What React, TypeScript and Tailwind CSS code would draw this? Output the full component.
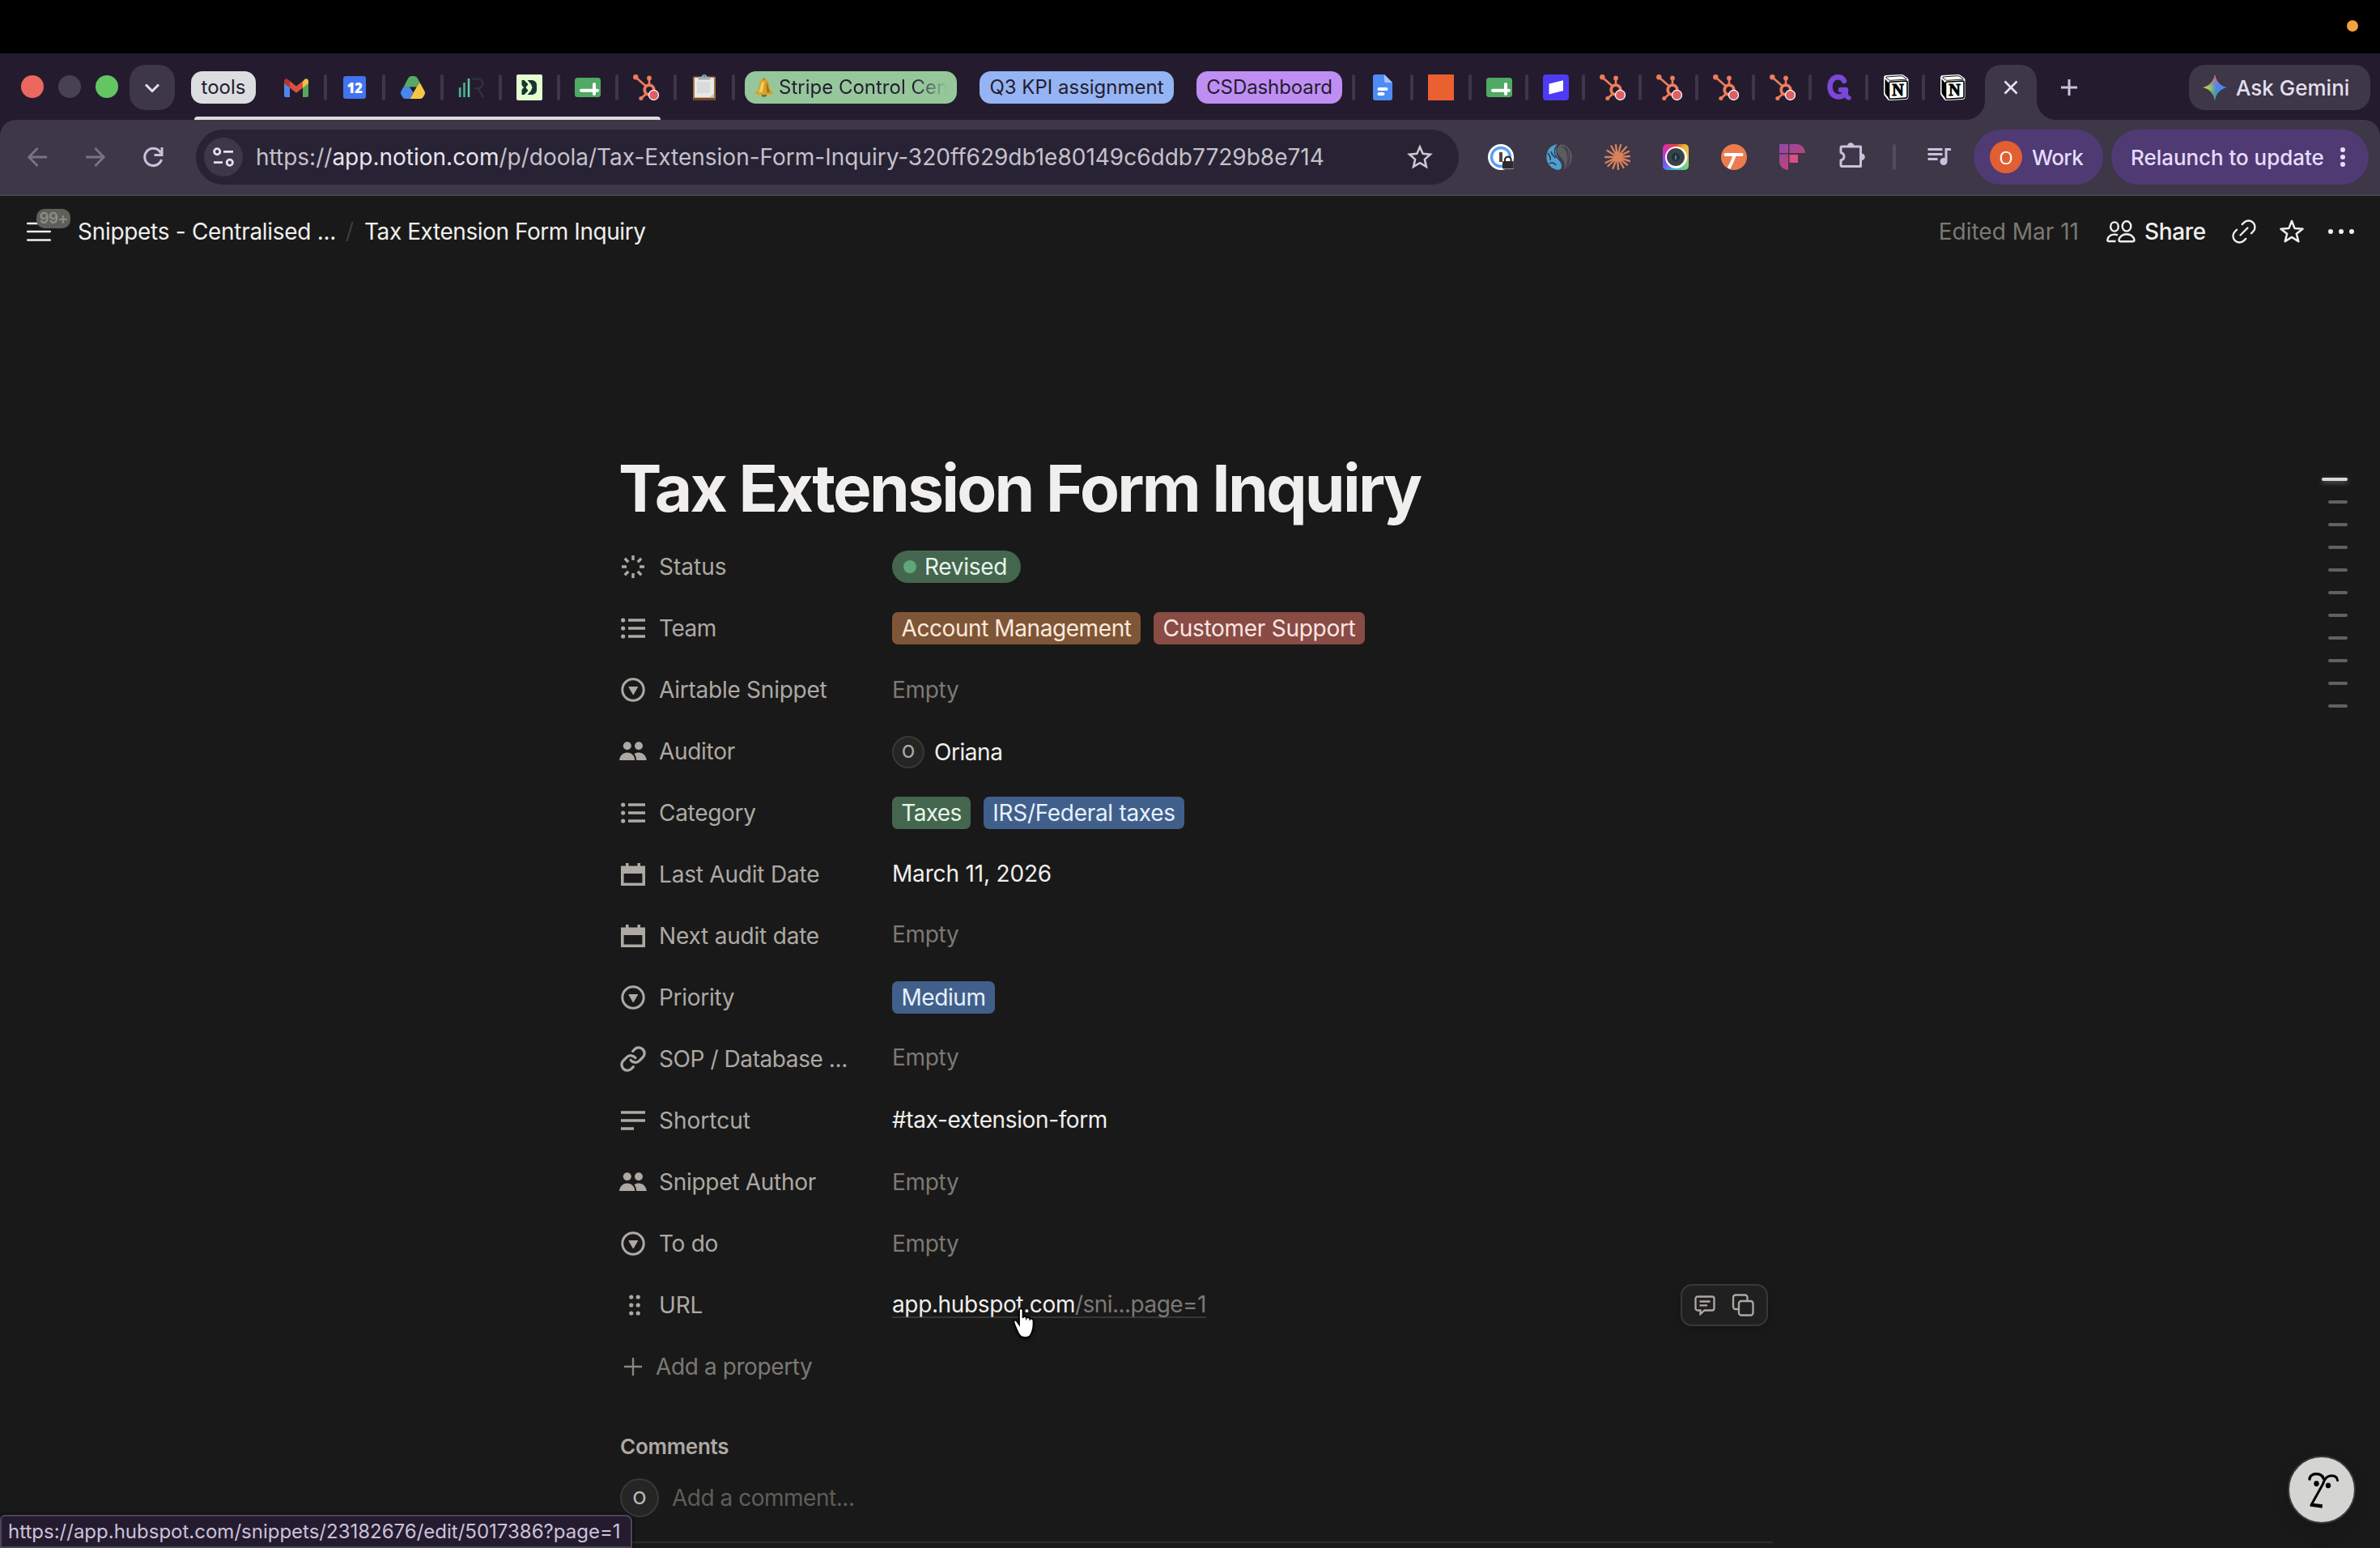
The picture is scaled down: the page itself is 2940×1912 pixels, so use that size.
import React from "react";
import { MdQueueMusic } from "react-icons/md";
import { Link, Link2 } from "lucide-react";

type TProps = { c?: string; children: React.ReactNode };
const T = ({ c = "", children }: TProps) => <span className={"whitespace-nowrap " + c}>{children}</span>;

/* ---------- tab strip icons ---------- */
const Gmail = () => (
  <svg width="30" height="23" viewBox="0 0 30 23">
    <path d="M0 4v17a2 2 0 0 0 2 2h5V10z" fill="#4f86ec" />
    <path d="M30 4v17a2 2 0 0 1-2 2h-5V10z" fill="#58a55c" />
    <path d="M23 3.500l2-2.200c2-2 5-.6 5 2V6l-7 5.500z" fill="#f1bf42" />
    <path d="M0 6V3.300C0 .7 3-.7 5 1.200l2 1.700v8.600z" fill="#b3362b" />
    <path d="M7 3l8 6.500L23 3v8.500l-8 6.300-8-6.300z" fill="#d95040" />
  </svg>
);
const Calendar12 = () => (
  <div className="flex h-7 w-7 items-center justify-center rounded-[3px] bg-[#4274ef] font-['Open_Sans'] text-[17px] leading-none font-extrabold tracking-[-0.5px] text-white">12</div>
);
const Drive = () => (
  <svg width="30" height="28" viewBox="0 0 30 28">
    <path d="M3.400 13.700L9 3C10 1 11.800 0 13.500 0h3c1.700 0 3.500 1 4.500 3l3 5.500-4.500 5.200z" fill="#58a961" />
    <path d="M3.400 13.500h7.800L15.500 20 11.500 28H6c-1.500 0-3-.8-3.800-2.200L.6 23c-.8-1.500-.8-3 0-4.500z" fill="#4b86f0" />
    <path d="M23.800 8.200l5.600 10.300c.8 1.500.8 3 0 4.500l-1.600 2.800C27 27.200 25.500 28 24 28H11.500l8-14.500z" fill="#f5c744" />
    <path d="M11 13.600h8.600l-4.200 6.200z" fill="#241c2e" />
  </svg>
);
const BarsR = () => (
  <svg width="32" height="26" viewBox="0 0 32 26">
    <path d="M2.200 13v12M7.500 7v18" stroke="#46b48c" strokeWidth="2.600" />
    <path d="M13 2v23" stroke="#5fc7a0" strokeWidth="2.600" />
    <path d="M17.500 2.500h7a5.800 5.800 0 0 1 0 11.600h-4.500M24.500 14L31 25.500" fill="none" stroke="#34323a" strokeWidth="2.200" />
  </svg>
);
const Doola = () => (
  <svg width="32" height="32" viewBox="0 0 32 32">
    <rect width="32" height="32" rx="2" fill="#e4fed0" />
    <path d="M6.500 7h3l5 5-3 4 3 4-5 5h-3v-6L9 16l-2.500-3z" fill="#16352f" />
    <path d="M13.500 7h5C22.500 7 25 9.500 25 13v6c0 3.500-2.500 6-6.500 6h-5l4.500-5 1.500-4L18 12z" fill="#16352f" />
  </svg>
);
const Sheet = () => (
  <svg width="32" height="24" viewBox="0 0 32 24">
    <rect width="32" height="24" rx="3.500" fill="#50a964" />
    <path d="M8 15.800h20M24 8v12" stroke="#fff" strokeWidth="4" strokeLinecap="round" />
  </svg>
);
const Hub = () => (
  <svg width="32" height="32" viewBox="0 0 32 32">
    <g stroke="#ee7d5c" fill="none">
      <path d="M4 4l12 10.500M20 4v9M16 24l-6 5.500" strokeWidth="2.600" />
      <circle cx="20" cy="19" r="5.800" strokeWidth="3.800" />
    </g>
    <g fill="#ee7d5c">
      <circle cx="3.300" cy="3.300" r="3.200" />
      <circle cx="20" cy="4.500" r="2.900" />
      <circle cx="9.800" cy="29.400" r="2.500" />
    </g>
    <circle cx="25.500" cy="25.400" r="6" fill="#dd5f63" stroke="#fff" strokeWidth="1.300" />
  </svg>
);
const Clipboard = () => (
  <svg width="30" height="32" viewBox="0 0 30 32">
    <rect x="1" y="2.500" width="28" height="29.500" rx="1.500" fill="#a0753c" />
    <rect x="1.500" y="29" width="27" height="3" rx="1" fill="#6f4a1e" />
    <rect x="3" y="4" width="24" height="24.500" fill="#e9e9ea" />
    <path d="M6 9h16v14H6z" fill="#dadadb" />
    <path d="M21 28.500l6-5v5z" fill="#c4c4c6" />
    <path d="M8 4.500V3h3.500c.5-2 1.800-3 3.500-3s3 1 3.500 3H22v1.500l1 2H7z" fill="#a5abb3" />
    <circle cx="15" cy="2.300" r="1.100" fill="#5c626b" />
  </svg>
);
const Bell = () => (
  <svg width="24" height="24" viewBox="0 0 24 24">
    <circle cx="12" cy="2.300" r="2" fill="#b98219" />
    <ellipse cx="12" cy="21.500" rx="3.200" ry="2.200" fill="#8d5f10" />
    <path d="M12 2.200c4.500 0 6 3.500 6.500 8 .4 4 1.200 5.800 5 8.300.9 1-1 2-4 2.300-4.500.5-10.500.5-15 0-3-.3-4.900-1.300-4-2.300 3.800-2.500 4.600-4.300 5-8.300.5-4.500 2-8 6.500-8z" fill="#d9a22b" />
    <path d="M9.500 5c-2 3-1.500 8-4.500 12.500l4.500.6C11.500 13 11 8 12 5z" fill="#f3cf66" />
    <path d="M15 5c2.300 3.500 1.700 8.500 5 13l-4.500.5C14.500 14 14.500 9 15 5z" fill="#a97414" />
  </svg>
);
const Doc = () => (
  <svg width="24" height="32" viewBox="0 0 24 32">
    <path d="M3 0h11l10 10v19a3 3 0 0 1-3 3H3a3 3 0 0 1-3-3V3a3 3 0 0 1 3-3z" fill="#4f8bf5" />
    <path d="M14 0l10 10H16a2 2 0 0 1-2-2z" fill="#a6c4f8" />
    <path d="M7.500 18h9M7.500 24h5" stroke="#fff" strokeWidth="4" strokeLinecap="round" />
  </svg>
);
const Orange = () => <div className="h-8 w-8 bg-[#ea6030]" />;
const Stripe = () => (
  <svg width="32" height="32" viewBox="0 0 32 32">
    <rect width="32" height="32" rx="4" fill="#4f3af4" />
    <path d="M7.500 11.500L25 7.200v12.900l-17.500 4.500z" fill="#fff" />
  </svg>
);
const GLogo = () => (
  <svg width="30" height="32" viewBox="0 0 30 32">
    <path d="M21 8C19.500 4.500 17 3.200 13.500 3.200 7 3.200 3.500 9 3.500 15.500S7.500 27.500 14 27.500c5.500 0 9-3.500 9-8.500h-6" fill="none" stroke="#7b47d8" strokeWidth="6.500" strokeLinecap="round" strokeLinejoin="round" />
    <path d="M23 19v4c0 3 1.500 5 4 6" fill="none" stroke="#7b47d8" strokeWidth="5.500" strokeLinecap="round" />
  </svg>
);
const Notion = () => (
  <svg width="32" height="32" viewBox="0 0 32 32">
    <path d="M1 4.500C1 2 2 1.300 4 1.100L22 0c2 0 3 .3 4.500 1.400l3.500 2.600c1 .9 1.500 1.500 1.500 3V27c0 2.500-1 3.800-3.500 4L9.500 32c-1.800.1-3-.3-4-1.600L2 26c-.8-1.200-1-2-1-3.500z" fill="#fff" />
    <path d="M2.500 5.500l4.500 5V29L3.300 24.500c-.6-.8-.8-1.400-.8-2.400z" fill="#000" />
    <path d="M4 3l18-1.300c1.200 0 2 .1 3 .8L29 5.300c.5.4.3.8-.3.800L9.500 7.300c-1 0-1.700-.2-2.300-.7L3.800 3.900c-.4-.4-.3-.8.2-.9z" fill="#fff" stroke="#000" strokeWidth=".9" />
    <path d="M8.500 9.200L28.800 8c.7 0 1.200.4 1.200 1.200V27c0 1.300-.6 2-1.900 2.100L9.500 30.200c-1.300.1-2-.4-2-1.700V10.400c0-.7.300-1.100 1-1.200z" fill="#fff" stroke="#000" strokeWidth="1.600" />
    <text x="11.300" y="25.800" fontFamily="Liberation Serif, serif" fontWeight="700" fontSize="20" fill="#000" stroke="#000" strokeWidth=".9">N</text>
  </svg>
);
const Divider = () => <div className="h-8 w-1 shrink-0 rounded-full bg-[#3d3748]" />;
const Cell = ({ children }: { children: React.ReactNode }) => (
  <>
    <div className="flex w-[68px] shrink-0 items-center justify-center">{children}</div>
    <Divider />
  </>
);
const TightCell = ({ children, last }: { children: React.ReactNode; last?: boolean }) => (
  <>
    <div className="flex w-[66px] shrink-0 items-center justify-center pl-px">{children}</div>
    {!last && <Divider />}
  </>
);

const TabStrip = () => (
  <div className="flex h-[82px] shrink-0 items-center bg-[#241c2e] pt-[2px] pl-[26px] font-[Inter]">
    <div className="mb-[2px] flex gap-[18px]">
      <div className="h-7 w-7 rounded-full bg-[#ed6761]" />
      <div className="h-7 w-7 rounded-full bg-[#484153]" />
      <div className="h-7 w-7 rounded-full bg-[#62c663]" />
    </div>
    <div className="ml-[14px] flex h-14 w-14 shrink-0 items-center justify-center rounded-[20px] bg-[#3d3748]">
      <svg width="20" height="13" viewBox="0 0 20 13"><path d="M2 2.500l8 8 8-8" fill="none" stroke="#e6dcf8" strokeWidth="3" /></svg>
    </div>
    <div className="relative ml-5 flex shrink-0 items-center">
      <div className="mr-4 flex h-10 w-20 items-center justify-center rounded-[14px] bg-[#dcdde1] text-[24px] text-[#241c2e]"><T>tools</T></div>
      <Cell><Gmail /></Cell>
      <Cell><Calendar12 /></Cell>
      <Cell><Drive /></Cell>
      <Cell><BarsR /></Cell>
      <Cell><Doola /></Cell>
      <Cell><Sheet /></Cell>
      <Cell><Hub /></Cell>
      <div className="absolute top-14 left-1 h-1 w-[576px] rounded-t-full bg-[#dcdde1]" />
    </div>
    <Cell><Clipboard /></Cell>
    <div className="ml-3 flex h-10 w-[262px] shrink-0 items-center gap-[6px] overflow-hidden rounded-[14px] bg-[#95c79b] pl-3 text-[24px] text-[#241c2e]">
      <div className="shrink-0"><Bell /></div>
      <div className="w-[208px] overflow-hidden bg-gradient-to-r from-[#241c2e] from-80% to-transparent bg-clip-text text-transparent"><T>Stripe Control Cen</T></div>
    </div>
    <div className="ml-7 flex h-10 w-60 shrink-0 items-center justify-center rounded-[14px] bg-[#95b4f3] text-[24px] text-[#241c2e]"><T>Q3 KPI assignment</T></div>
    <div className="mr-3 ml-7 flex h-10 w-[180px] shrink-0 items-center justify-center rounded-[14px] bg-[#bf8ef3] text-[24px] text-[#241c2e]"><T c="tracking-[-0.1px]">CSDashboard</T></div>
    <Divider />
    <Cell><Doc /></Cell>
    <Cell><Orange /></Cell>
    <TightCell><Sheet /></TightCell>
    <TightCell><Stripe /></TightCell>
    <TightCell><Hub /></TightCell>
    <TightCell><Hub /></TightCell>
    <TightCell><Hub /></TightCell>
    <TightCell><Hub /></TightCell>
    <TightCell><GLogo /></TightCell>
    <TightCell><Notion /></TightCell>
    <TightCell last><Notion /></TightCell>
    <div className="relative ml-2 flex h-[68px] w-16 shrink-0 items-center justify-center self-end rounded-t-[20px] bg-[#3d3748] pb-3">
      <span className="absolute bottom-0 -left-6 h-6 w-6 bg-[radial-gradient(circle_at_0_0,transparent_23.5px,#3d3748_24.5px)]" />
      <span className="absolute -right-6 bottom-0 h-6 w-6 bg-[radial-gradient(circle_at_100%_0,transparent_23.5px,#3d3748_24.5px)]" />
      <svg width="18" height="18" viewBox="0 0 18 18"><path d="M1.500 1.500l15 15M16.500 1.500l-15 15" stroke="#e8e2f0" strokeWidth="2.600" /></svg>
    </div>
    <svg className="ml-[30px] shrink-0" width="20" height="20" viewBox="0 0 20 20"><path d="M10 0v20M0 10h20" stroke="#cbc1dc" strokeWidth="3" /></svg>
    <div className="ml-[138px] flex h-14 w-56 shrink-0 items-center rounded-[20px] bg-[#3d3748] pl-[17px]">
      <svg width="30" height="32" viewBox="0 0 30 30" preserveAspectRatio="none">
        <defs>
          <linearGradient id="gemA" x1="0" y1="0.500" x2="1" y2="0.500"><stop offset="0" stopColor="#f6c344" /><stop offset=".35" stopColor="#8fbf6a" /><stop offset=".55" stopColor="#4d86f0" /></linearGradient>
          <linearGradient id="gemB" x1="0.500" y1="0" x2="0.500" y2="0.500"><stop offset="0" stopColor="#ee4d45" /><stop offset=".4" stopColor="#e06a6a" stopOpacity=".8" /><stop offset="1" stopColor="#4d86f0" stopOpacity="0" /></linearGradient>
          <linearGradient id="gemC" x1="0.500" y1="1" x2="0.500" y2="0.550"><stop offset="0" stopColor="#3aa757" /><stop offset="1" stopColor="#3aa757" stopOpacity="0" /></linearGradient>
        </defs>
        {["url(#gemA)", "url(#gemB)", "url(#gemC)"].map((f) => (
          <path key={f} fill={f} d="M15 0c1.500 8 7 13.500 15 15-8 1.500-13.500 7-15 15-1.500-8-7-13.500-15-15 8-1.500 13.500-7 15-15z" />
        ))}
      </svg>
      <div className="ml-[11px] text-[26px] font-medium text-[#e5dfed]"><T>Ask Gemini</T></div>
    </div>
  </div>
);

/* ---------- toolbar ---------- */
const OnePassword = () => (
  <svg width="32" height="32" viewBox="0 0 32 32">
    <circle cx="16" cy="16" r="16" fill="#fff" />
    <circle cx="16" cy="16" r="11.500" fill="none" stroke="#5a9ef6" strokeWidth="3.400" />
    <rect x="14" y="10" width="4" height="12" fill="#4a4a4a" />
    <path d="M18.500 16.500h12.800v14.500H18z" fill="#fff" />
    <rect x="18" y="21" width="13.500" height="9.500" rx="1.500" fill="#2b2b2b" />
    <path d="M21 22v-2.500a3.800 3.800 0 0 1 7.600 0V22" fill="none" stroke="#2b2b2b" strokeWidth="2.200" />
  </svg>
);
const Swirl = () => (
  <svg width="32" height="32" viewBox="0 0 32 32">
    <path d="M14 .2C5 1 0 8 .3 17 1 25 7 31 14.500 31.900 20 31 22 27 19 22 16 17 9 12 14 .2z" fill="#4ba0cf" />
    <path d="M18 .2C12 4 12 9 16 14s9 9 6 17c6-2.500 10-8.500 9.800-15.500C31.500 7 25 .6 18 .2z" fill="#5c5b60" />
    <path d="M14 1C8 8 10 13 15 18s6 9 4 13.500" fill="none" stroke="#3d3748" strokeWidth="1.600" />
    <path d="M19 3c8 2 10 14 6 26M23 4c7 5 7 14 4 22" fill="none" stroke="#3d3748" strokeWidth="1.200" />
    <path d="M2 11c3 4 4 6 3 9M6 9c1 4 3 6 6 8M4 24c3-2 6-1 8 2" fill="none" stroke="#3d3748" strokeWidth="1.600" />
  </svg>
);
const Burst = () => (
  <svg width="32" height="32" viewBox="0 0 32 32">
    <g stroke="#d9805c" strokeWidth="2.400" strokeLinecap="round">
      <path d="M16 16L8.500 2.500M16 16L14 1.200M16 16L20 1.200M16 16L27 3.500M16 16L30 9M16 16l15-1M16 16l15 5M16 16l12 9.500M16 16l7.500 13M16 16l1 15M16 16l-5.500 14M16 16L4.500 27M16 16L1.500 23M16 16H1M16 16L3.500 8" />
    </g>
    <circle cx="16" cy="16" r="4" fill="#d9805c" />
  </svg>
);
const Camera = () => (
  <div className="flex h-8 w-8 items-center justify-center rounded-[5px] bg-[conic-gradient(from_0deg,#e0412c,#f0b53c,#e8c648,#8fd06a,#4cc9b0,#4aa0e8,#7a4ff0,#c434e8,#e0308f,#e0412c)]">
    <div className="flex h-[27px] w-[27px] items-center justify-center rounded-full bg-white">
      <div className="flex h-[22px] w-[22px] items-center justify-center rounded-full bg-[#3b4148]">
        <div className="flex h-[10px] w-[10px] items-center justify-center rounded-full bg-[#20303a]"><div className="h-[5px] w-[2px] bg-[#4b7f95]" /></div>
      </div>
    </div>
  </div>
);
const TBadge = () => (
  <svg width="32" height="32" viewBox="0 0 32 32">
    <circle cx="16" cy="16" r="16" fill="#ec7c4e" />
    <path d="M5.500 13h20" stroke="#fff" strokeWidth="4" strokeLinecap="round" />
    <path d="M17 13c-1.500 5-4 11-7.500 17" fill="none" stroke="#fff" strokeWidth="4" />
  </svg>
);
const Firefly = () => (
  <svg width="32" height="32" viewBox="0 0 32 32">
    <defs><linearGradient id="ff" x1="0" y1="0" x2=".8" y2="1"><stop offset="0" stopColor="#8d4aa8" /><stop offset="1" stopColor="#cf3f6b" /></linearGradient></defs>
    <path d="M0 0h11v11H0zM12.500 0H21c6 0 10.500 4 11 11H12.500zM0 12.500h11V32C4 31 0 27 0 21z" fill="url(#ff)" />
    <path d="M12.500 13H23v10H12.500z" fill="#dc4d83" />
  </svg>
);
const Puzzle = () => (
  <svg width="32" height="34" viewBox="0 0 32 34">
    <path d="M2 7.500C2 6.600 2.600 6 3.500 6H26.500v24.500h-23c-.9 0-1.500-.6-1.500-1.500v-6c2.500-.6 4-2.300 4-4.700s-1.500-4.100-4-4.700z" fill="none" stroke="#cbc1dc" strokeWidth="3" strokeLinejoin="round" />
    <path d="M10 5.500a4.200 4.200 0 0 1 8.400 0zM27.500 14.500a4.300 4.300 0 0 1 0 8.600z" fill="#cbc1dc" />
  </svg>
);

const Toolbar = () => (
  <div className="shrink-0 bg-[#241c2e] font-[Inter]">
    <div className="flex h-[94px] items-center rounded-t-[20px] border-b-2 border-[#48464b] bg-[#3d3748] pl-[34px] text-[28px]">
      <svg width="24" height="24" viewBox="0 0 24 24"><path d="M24 12H2M12.500 1L1.800 12l10.700 11" fill="none" stroke="#797286" strokeWidth="2.800" /></svg>
      <svg className="ml-12" width="24" height="24" viewBox="0 0 24 24"><path d="M0 12h22M11.500 1l10.700 11-10.700 11" fill="none" stroke="#797286" strokeWidth="2.800" /></svg>
      <svg className="ml-[46px]" width="26" height="26" viewBox="0 0 26 26">
        <path d="M23.500 16A10.600 10.600 0 1 1 21.500 6.200L23 8" fill="none" stroke="#cbc1dc" strokeWidth="3" />
        <path d="M24 1v9.500h-9.500" fill="none" stroke="#cbc1dc" strokeWidth="3" />
      </svg>
      <div className="ml-10 flex h-[68px] w-[1560px] shrink-0 items-center rounded-full bg-[#282334] pl-[10px]">
        <div className="flex h-12 w-12 shrink-0 items-center justify-center rounded-full bg-[#3d3748]">
          <svg width="26" height="24" viewBox="0 0 26 24"><g fill="none" stroke="#e5dfed" strokeWidth="2.800"><circle cx="5.200" cy="5.300" r="3.600" /><path d="M13 5.300h12M1 18.700h11" /><circle cx="20.800" cy="18.700" r="3.600" /></g></svg>
        </div>
        <div className="ml-[16px] flex-1 text-[#c5c1cb]"><T>https://<span className="text-[#e8e4ee]">app.notion.com</span>/p/doola/Tax-Extension-Form-Inquiry-320ff629db1e80149c6ddb7729b8e714</T></div>
        <svg className="mr-[32px]" width="32" height="32" viewBox="0 0 32 32"><path d="M16 3.500l3.700 8.400 9.100.9-6.900 6.100 2 9-7.900-4.700-7.900 4.700 2-9-6.900-6.100 9.100-.9z" fill="none" stroke="#cbc8d0" strokeWidth="2.600" /></svg>
      </div>
      <div className="ml-9 flex shrink-0 items-center gap-10">
        <OnePassword /><Swirl /><Burst /><Camera /><TBadge /><Firefly />
      </div>
      <div className="mb-[4px] ml-[42px]"><Puzzle /></div>
      <div className="ml-[34px] h-8 w-1 rounded-full bg-[#524c5f]" />
      <MdQueueMusic className="mb-1 ml-[35px] shrink-0 text-[#cbc1dc]" size={36} />
      <div className="ml-[25px] flex h-[68px] w-40 shrink-0 items-center rounded-full bg-[#4f3a74] pl-5 text-[26px] font-medium text-[#e6dcf8]">
        <div className="flex h-10 w-10 items-center justify-center rounded-full bg-[#e15f32] font-['Open_Sans'] text-[22px] font-normal text-white">O</div>
        <span className="ml-[12px]"><T c="tracking-[-0.6px]">Work</T></span>
      </div>
      <div className="ml-[10px] flex h-[68px] w-[318px] shrink-0 items-center rounded-full bg-[#4f3a74] pl-6 text-[26px] font-medium text-[#e6dcf8]">
        <T c="tracking-[-0.05px]">Relaunch to update</T>
        <div className="ml-auto mr-[29px] flex flex-col gap-[3px]">
          <i className="h-[6px] w-[6px] rounded-full bg-[#e6dcf8]" /><i className="h-[6px] w-[6px] rounded-full bg-[#e6dcf8]" /><i className="h-[6px] w-[6px] rounded-full bg-[#e6dcf8]" />
        </div>
      </div>
    </div>
  </div>
);

/* ---------- page header ---------- */
const Header = () => (
  <div className="flex h-[88px] shrink-0 items-center pl-[33px] text-[28px] text-[#f0efed]">
    <div className="relative shrink-0">
      <svg width="30" height="24" viewBox="0 0 30 24"><path d="M1.200 2h27.600M1.200 12h27.600M1.200 22.500h27.600" stroke="#f0efed" strokeWidth="2.600" strokeLinecap="round" /></svg>
      <div className="absolute -top-4 left-3 flex h-6 w-[42px] items-center justify-center rounded-[10px] bg-[#5f5e5a] text-[19px] font-semibold text-[#8d8c87]"><T c="tracking-[-0.7px]">99+</T></div>
    </div>
    <div className="ml-[33px]"><T c="tracking-[-0.3px]">Snippets - Centralised ...</T></div>
    <svg className="ml-[12px]" width="10" height="24" viewBox="0 0 10 24"><path d="M8.500 0L1.500 24" stroke="#3f3e3c" strokeWidth="2.200" /></svg>
    <div className="ml-[13px]"><T c="tracking-[-0.44px]">Tax Extension Form Inquiry</T></div>
    <div className="ml-auto text-[#7c7974]"><T>Edited Mar 11</T></div>
    <svg className="ml-[34px]" width="36" height="30" viewBox="0 0 36 30">
      <g fill="none" stroke="#f0efed" strokeWidth="2.400">
        <ellipse cx="10" cy="9" rx="4.800" ry="5.600" /><ellipse cx="25" cy="8.400" rx="5.300" ry="6.200" />
        <path d="M11.500 27H3c-1.300 0-1.800-.7-1.600-1.800C2 21.500 5 18.600 10 18.600c1.500 0 2.900.3 4 .8" />
        <path d="M17.500 27.200h15c1.500 0 2.200-.8 2-2-.7-4-4.500-7-9.500-7s-8.800 3-9.500 7c-.2 1.200.5 2 2 2z" />
      </g>
    </svg>
    <div className="ml-[11px] font-medium"><T c="tracking-[-0.3px]">Share</T></div>
    <Link2 className="ml-[28px] -rotate-45" size={38} strokeWidth={1.500} />
    <svg className="ml-[24px]" width="32" height="32" viewBox="0 0 32 32"><path d="M16 3l3.600 9.100 9.900.6-7.700 6.100 2.500 9.400L16 22.900l-8.300 5.300 2.500-9.400L2.500 12.700l9.900-.6z" fill="none" stroke="#f0efed" strokeWidth="2.500" strokeLinejoin="round" /></svg>
    <svg className="mr-[31px] ml-[28px]" width="34" height="8" viewBox="0 0 34 8"><g fill="#f0efed"><circle cx="4" cy="4" r="3" /><circle cx="17" cy="4" r="3" /><circle cx="30" cy="4" r="3" /></g></svg>
  </div>
);

/* ---------- property icons ---------- */
const IcStatus = () => (
  <svg width="30" height="30" viewBox="0 0 30 30"><path d="M15 1v6M15 23v6M1 15h6M23 15h6M4.800 4.800l4.400 4.400M20.800 20.800l4.400 4.400M4.800 25.200l4.400-4.400M20.800 9.200l4.400-4.400" stroke="#ada9a3" strokeWidth="3.400" /></svg>
);
const IcList = () => (
  <svg width="30" height="26" viewBox="0 0 30 26"><path d="M9 3h21M9 13h21M9 23h21" stroke="#ada9a3" strokeWidth="3.600" /><g fill="#ada9a3"><circle cx="2.700" cy="3" r="2.600" /><circle cx="2.700" cy="13" r="2.600" /><circle cx="2.700" cy="23" r="2.600" /></g></svg>
);
const IcSelect = () => (
  <svg width="30" height="30" viewBox="0 0 30 30"><circle cx="15" cy="15" r="13.200" fill="none" stroke="#ada9a3" strokeWidth="3" /><path d="M10 11h10.500c.5 0 .7.400.5.800L15.800 20.800c-.3.500-.9.500-1.200 0L9.500 11.800c-.2-.4 0-.8.5-.8z" fill="#ada9a3" /></svg>
);
const IcPeople = () => (
  <svg width="34" height="24" viewBox="0 0 34 24"><g fill="#ada9a3"><circle cx="9.800" cy="5.300" r="5" /><circle cx="24" cy="5.300" r="5" /><path d="M0 23c.6-5.500 4.500-9.500 9.800-9.500S19 17.500 19.300 23z" /><path d="M18.500 15.200c1.500-1.100 3.300-1.700 5.500-1.700 5.300 0 9.200 4 9.800 9.500H21.200c-.2-3.200-1.100-5.800-2.700-7.800z" /></g></svg>
);
const IcCal = () => (
  <svg width="30" height="29" viewBox="0 0 30 29"><path d="M6 0h3.500v3.500h11V0H24v3.500h6V28H0V3.500h6zM3.600 13v11.500h22.800V13z" fill="#ada9a3" fillRule="evenodd" /></svg>
);
const IcLink = () => <Link size={34} strokeWidth={2.300} className="shrink-0 text-[#ada9a3]" />;
const IcText = () => (
  <svg width="30" height="26" viewBox="0 0 30 26"><path d="M0 3h30M0 13h30M0 23h16" stroke="#ada9a3" strokeWidth="3.600" /></svg>
);
const IcGrip = () => (
  <svg className="ml-[4px]" width="14" height="26" viewBox="0 0 14 26"><g fill="#ada9a3">{[3, 13, 23].map((y) => (<g key={y}><circle cx="2.800" cy={y} r="2.600" /><circle cx="11.200" cy={y} r="2.600" /></g>))}</g></svg>
);

const tagBase = "mr-4 flex h-10 items-center justify-center rounded-[7px] ";
const Empty = () => <span className="text-[#7c7974]"><T c="tracking-[-0.3px]">Empty</T></span>;

type RowProps = { icon: React.ReactNode; label: string; ls?: string; shift?: string; children: React.ReactNode };
const Row = ({ icon, label, ls = "tracking-[-0.3px]", shift = "", children }: RowProps) => (
  <div className="flex h-[76px] items-center">
    <div className="-ml-px flex w-[34px] shrink-0 items-center justify-center">{icon}</div>
    <div className="ml-[15px] w-[288px] shrink-0 text-[#ada9a3]"><T c={ls}>{label}</T></div>
    <div className={"flex flex-1 items-center " + shift}>{children}</div>
  </div>
);

const Hand = () => (
  <svg className="absolute top-[40px] left-[148px] drop-shadow-[0_2px_2px_rgba(0,0,0,0.5)]" width="32" height="42" viewBox="0 0 32 42">
    <path d="M9 4.500C9 2.800 10 2 11.200 2s2.300.9 2.300 2.600V14c.2-1.500 1-2 2-2 1.300 0 2.200.8 2.400 2.200.4-.8 1.200-1.200 2-1.200 1.400 0 2.200.9 2.400 2.400.4-.5 1-.8 1.800-.8 1.600 0 2.400 1.200 2.400 3.200 0 3.200.3 6-.5 9.200C25 31.500 24.500 33 23 35c-1.500 2.200-3.500 3-7 3s-5.500-1.200-7.300-4C6.500 30.500 5.500 27 4 23.500c-.8-2-1.600-3.600-1.700-5 0-2 2.200-2.500 3.600-.8L9 22z" fill="#fff" stroke="#000" strokeWidth="1.800" />
  </svg>
);

const ToC = () => (
  <div className="absolute top-[348px] right-10 flex flex-col items-end gap-6">
    <div className="h-1 w-8 rounded-full bg-[#d9d9d8] shadow-[0_2px_6px_rgba(255,255,255,0.35)]" />
    {Array.from({ length: 10 }, (_, i) => <div key={i} className="h-1 w-6 rounded-full bg-[#62615c]" />)}
  </div>
);

const Main = () => (
  <div className="relative flex-1 bg-[#191919] font-[Inter]">
    <Header />
    <div className="ml-[766px] w-[1424px] pt-[225px] text-[28px] text-[#f0efed]">
      <div className="-ml-[2px] h-24 text-[80px] leading-[96px] font-bold"><T c="tracking-[-2.7px]">Tax Extension Form Inquiry</T></div>
      <div className="pt-[11px]">
        <Row icon={<IcStatus />} label="Status" ls="tracking-normal">
          <div className="flex h-10 w-[159px] items-center rounded-full bg-[#44664e] pl-[14px] text-[#e8f5ea]"><i className="mr-[10px] h-4 w-4 rounded-full bg-[#60a676]" /><T c="tracking-[-0.3px]">Revised</T></div>
        </Row>
        <Row icon={<IcList />} label="Team" ls="tracking-[-0.5px]">
          <div className={tagBase + "w-[307px] bg-[#7f5537] text-[#fbeadd]"}><T c="tracking-[-0.42px]">Account Management</T></div>
          <div className={tagBase + "w-[261px] bg-[#884c45] text-[#fce6e3]"}><T c="tracking-[-0.28px]">Customer Support</T></div>
        </Row>
        <Row icon={<IcSelect />} label="Airtable Snippet" ls="tracking-[-0.25px]"><Empty /></Row>
        <Row icon={<IcPeople />} label="Auditor" shift="pt-[2px]">
          <div className="mr-[12px] flex h-10 w-10 items-center justify-center rounded-full border-2 border-[#383836] bg-[#252525] text-[21px] font-medium text-[#ada9a3]">O</div><T c="tracking-[-0.45px]">Oriana</T>
        </Row>
        <Row icon={<IcList />} label="Category">
          <div className={tagBase + "w-[97px] bg-[#44664e] text-[#e8f5ea]"}><T c="tracking-[-0.6px]">Taxes</T></div>
          <div className={tagBase + "w-[248px] bg-[#415f8b] text-[#e6f2fc]"}><T c="tracking-[-0.3px]">IRS/Federal taxes</T></div>
        </Row>
        <Row icon={<IcCal />} label="Last Audit Date" ls="tracking-[-0.2px]" shift="pb-[2px]"><T c="tracking-[-0.17px]">March 11, 2026</T></Row>
        <Row icon={<IcCal />} label="Next audit date" ls="tracking-[-0.2px]" shift="pb-[4px]"><Empty /></Row>
        <Row icon={<IcSelect />} label="Priority">
          <div className={tagBase + "w-[127px] bg-[#415f8b] text-[#e6f2fc]"}><T c="tracking-[-0.4px]">Medium</T></div>
        </Row>
        <Row icon={<IcLink />} label="SOP / Database ..." ls="tracking-[-0.42px]" shift="pb-[4px]"><Empty /></Row>
        <Row icon={<IcText />} label="Shortcut" ls="tracking-normal" shift="pb-[3px]"><T c="tracking-[-0.38px]">#tax-extension-form</T></Row>
        <Row icon={<IcPeople />} label="Snippet Author" ls="tracking-[-0.27px]"><Empty /></Row>
        <Row icon={<IcSelect />} label="To do"><Empty /></Row>
        <Row icon={<IcGrip />} label="URL" ls="tracking-[-0.2px]" shift="relative h-[76px]">
          <div className="mb-[1px] flex h-[32px] items-center border-b-2 border-[#363635]"><T c="tracking-[-0.37px]">app.hubspot.com</T><span className="text-[#7c7974]"><T c="tracking-[-0.55px]">/sni...page=1</T></span></div>
          <Hand />
          <div className="mr-[6px] ml-auto flex h-[52px] w-[108px] items-center justify-center gap-[20px] rounded-[14px] border-2 border-[#383836] bg-[#202020] shadow-[0_4px_12px_rgba(0,0,0,0.2)]">
            <svg width="26" height="26" viewBox="0 0 26 26"><path d="M4 2.500h18a2.500 2.500 0 0 1 2.500 2.500v12a2.500 2.500 0 0 1-2.500 2.500h-9.500L7.500 24v-4.500H4A2.500 2.500 0 0 1 1.500 17V5A2.500 2.500 0 0 1 4 2.500zM6.500 8.500h13M6.500 13.300h9.500" fill="none" stroke="#ada9a3" strokeWidth="2.300" /></svg>
            <svg width="28" height="28" viewBox="0 0 28 28"><g fill="none" stroke="#ada9a3" strokeWidth="2.300"><rect x="9" y="9" width="17.500" height="17.500" rx="3" /><path d="M8 19H5a3 3 0 0 1-3-3V4.500a3 3 0 0 1 3-3h11.500a3 3 0 0 1 3 3V8" /></g></svg>
          </div>
        </Row>
        <div className="flex h-[76px] items-center pl-[5px] text-[#7c7974]">
          <svg width="22" height="22" viewBox="0 0 22 22"><path d="M11 0v22M0 11h22" stroke="#8a8781" strokeWidth="2.400" /></svg>
          <span className="ml-[17px]"><T c="tracking-[-0.4px]">Add a property</T></span>
        </div>
      </div>
      <div className="mt-[45px] text-[26px] leading-[32px] font-semibold text-[#ada9a3]"><T c="tracking-[-0.25px]">Comments</T></div>
      <div className="mt-[23px] flex h-12 items-center border-0 text-[#5f5d58]">
        <div className="mr-[16px] flex h-12 w-12 items-center justify-center rounded-full border-2 border-[#383836] bg-[#252525] text-[22px] font-medium text-[#bcb9b4]">O</div>
        <T c="tracking-[-0.48px]">Add a comment...</T>
      </div>
      <div className="mt-[30px] h-[2px] bg-[#2c2c2b]" />
    </div>
    <ToC />
    <div className="absolute right-[30px] bottom-[30px] h-[84px] w-[84px] rounded-full border-2 border-[#3a3a39] bg-[#d4d4d3] shadow-[0_8px_24px_rgba(0,0,0,0.15)]">
      <svg className="-m-[2px]" width="84" height="84" viewBox="0 0 84 84">
        <g fill="none" stroke="#000" strokeWidth="3" strokeLinecap="round">
          <path d="M27 29c0-4 4-6.500 8-6.500 5 0 8 2 9 5.500" strokeWidth="3.400" />
          <path d="M29 61L43.500 35c2-7 6-10.500 11-10.200 4.500.2 6.800 2.500 7 5.700" />
        </g>
        <ellipse cx="35.500" cy="34.500" rx="3.200" ry="3.400" /><ellipse cx="50" cy="36.800" rx="3.200" ry="3.400" />
        <path d="M29.500 58.500l13.500 1.700-.5 4.500-15-2.200z" />
      </svg>
    </div>
    <div className="absolute bottom-0 left-0 flex h-[41px] w-[781px] items-center rounded-tr-[8px] rounded-tl-[6px] border-2 border-[#4b4659] bg-[#241c2e] pl-2 text-[24px] text-[#cbc1dc] shadow-[0_0_4px_rgba(0,0,0,0.9)]">
      <T>https://app.hubspot.com/snippets/23182676/edit/5017386?page=1</T>
    </div>
  </div>
);

export default function App() {
  return (
    <div className="relative flex h-[1912px] w-[2940px] flex-col overflow-hidden bg-[#191919] [font-family:Inter,sans-serif]">
      <div className="flex h-[66px] shrink-0 items-start justify-end bg-black pt-[25px] pr-[27px]"><div className="h-[14px] w-[14px] rounded-full bg-[#f2a33c]" /></div>
      <TabStrip />
      <Toolbar />
      <Main />
    </div>
  );
}
